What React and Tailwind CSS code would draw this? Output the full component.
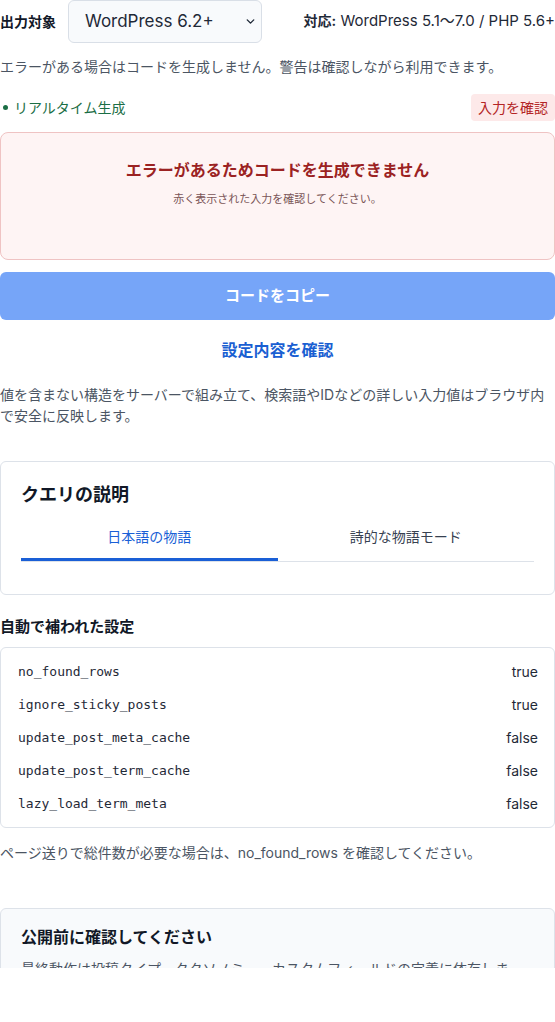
import { ChevronDown } from 'lucide-react';

const autoSettings = [
  { key: 'no_found_rows', value: 'true' },
  { key: 'ignore_sticky_posts', value: 'true' },
  { key: 'update_post_meta_cache', value: 'false' },
  { key: 'update_post_term_cache', value: 'false' },
  { key: 'lazy_load_term_meta', value: 'false' },
];

const App = () => {
  return (
    <div className="h-[968px] overflow-hidden bg-white font-['Inter','Noto_Sans_CJK_JP',sans-serif] text-[#1e293b]">
      {/* target row */}
      <div className="flex items-center justify-between">
        <div className="flex items-center gap-3">
          <span className="text-[14px] font-bold text-[#111827]">出力対象</span>
          <div className="relative">
            <select
              defaultValue="6.2"
              className="h-[43px] w-[194px] appearance-none rounded-md border border-[#d9dfe7] bg-[#f8fafc] pl-4 pr-8 text-[17px] text-[#1f2937]"
            >
              <option value="6.2">WordPress 6.2+</option>
            </select>
            <ChevronDown
              size={13}
              strokeWidth={2.6}
              className="pointer-events-none absolute right-[5px] top-[15px] text-[#1f2937]"
            />
          </div>
        </div>
        <p className="text-[15px] text-[#1f2937]">
          <span className="text-[14px] font-bold">対応:</span> WordPress 5.1〜7.0 / PHP 5.6+
        </p>
      </div>

      <p className="mt-[14px] text-[14px] leading-5 text-[#4b5563]">
        エラーがある場合はコードを生成しません。警告は確認しながら利用できます。
      </p>

      {/* status row */}
      <div className="mt-[17px] flex items-center justify-between">
        <div className="flex items-center gap-[6px] pl-[3px] text-[14px] text-[#1b6e45]">
          <span className="h-[5px] w-[5px] rounded-full bg-[#1b6e45]" />
          リアルタイム生成
        </div>
        <span className="flex h-[27px] items-center rounded-[4px] bg-[#fde9e9] px-[7px] text-[14px] text-[#b42525]">
          入力を確認
        </span>
      </div>

      {/* error panel */}
      <div className="mt-[11px] flex h-[128px] flex-col items-center rounded-lg border border-[#efc3c3] bg-[#fef4f4] pt-[25px]">
        <p className="text-[16px] font-bold leading-6 text-[#9b2222]">エラーがあるためコードを生成できません</p>
        <p className="mt-[9px] text-[11px] text-[#7a5557]">赤く表示された入力を確認してください。</p>
      </div>

      <button className="mt-3 h-12 w-full rounded-md bg-[#76a5f8] text-[15px] font-semibold text-white">
        コードをコピー
      </button>

      <p className="mt-[18px] text-center text-[16px] font-bold leading-6 text-[#1a5fd2]">設定内容を確認</p>

      <p className="mt-[22px] text-[14px] leading-[21px] text-[#4b5563]">
        値を含まない構造をサーバーで組み立て、検索語やIDなどの詳しい入力値はブラウザ内で安全に反映します。
      </p>

      {/* query explanation */}
      <div className="mt-[35px] rounded-md border border-[#dde2e9] px-5 pb-8 pt-5">
        <h2 className="text-[18px] font-bold leading-[26px] text-[#111827]">クエリの説明</h2>
        <div className="mt-2 flex border-b border-[#dde2e9]">
          <button className="flex-1 border-b-[3px] border-[#1a5fd6] pb-[11px] pt-[11px] text-[14px] leading-5 text-[#1a5fd6]">
            日本語の物語
          </button>
          <button className="flex-1 border-b-[3px] border-transparent pb-[11px] pt-[11px] text-[14px] leading-5 text-[#374151]">
            詩的な物語モード
          </button>
        </div>
      </div>

      <h3 className="mt-[21px] text-[15px] font-bold leading-[22px] text-[#111827]">自動で補われた設定</h3>

      <div className="mt-[9px] rounded-md border border-[#dde2e9] py-[7px] pl-[17px] pr-4">
        {autoSettings.map((item) => (
          <div key={item.key} className="flex h-[33px] items-center justify-between">
            <span className="font-['DejaVu_Sans_Mono',monospace] text-[13px] text-[#1f2937]">{item.key}</span>
            <span className="text-[14px] text-[#1f2937]">{item.value}</span>
          </div>
        ))}
      </div>

      <p className="mt-[15px] text-[14px] leading-5 text-[#4b5563]">
        ページ送りで総件数が必要な場合は、no_found_rows を確認してください。
      </p>

      {/* before publishing */}
      <div className="mt-[45px] rounded-md border border-[#dde2e9] bg-[#f8fafc] px-5 pb-5 pt-4">
        <h2 className="text-[16px] font-bold leading-6 text-[#111827]">公開前に確認してください</h2>
        <p className="mt-2 text-[14px] leading-6 text-[#4b5563]">
          最終動作は投稿タイプ、タクソノミー、カスタムフィールドの定義に依存します。
        </p>
      </div>
    </div>
  );
};

export default App;
